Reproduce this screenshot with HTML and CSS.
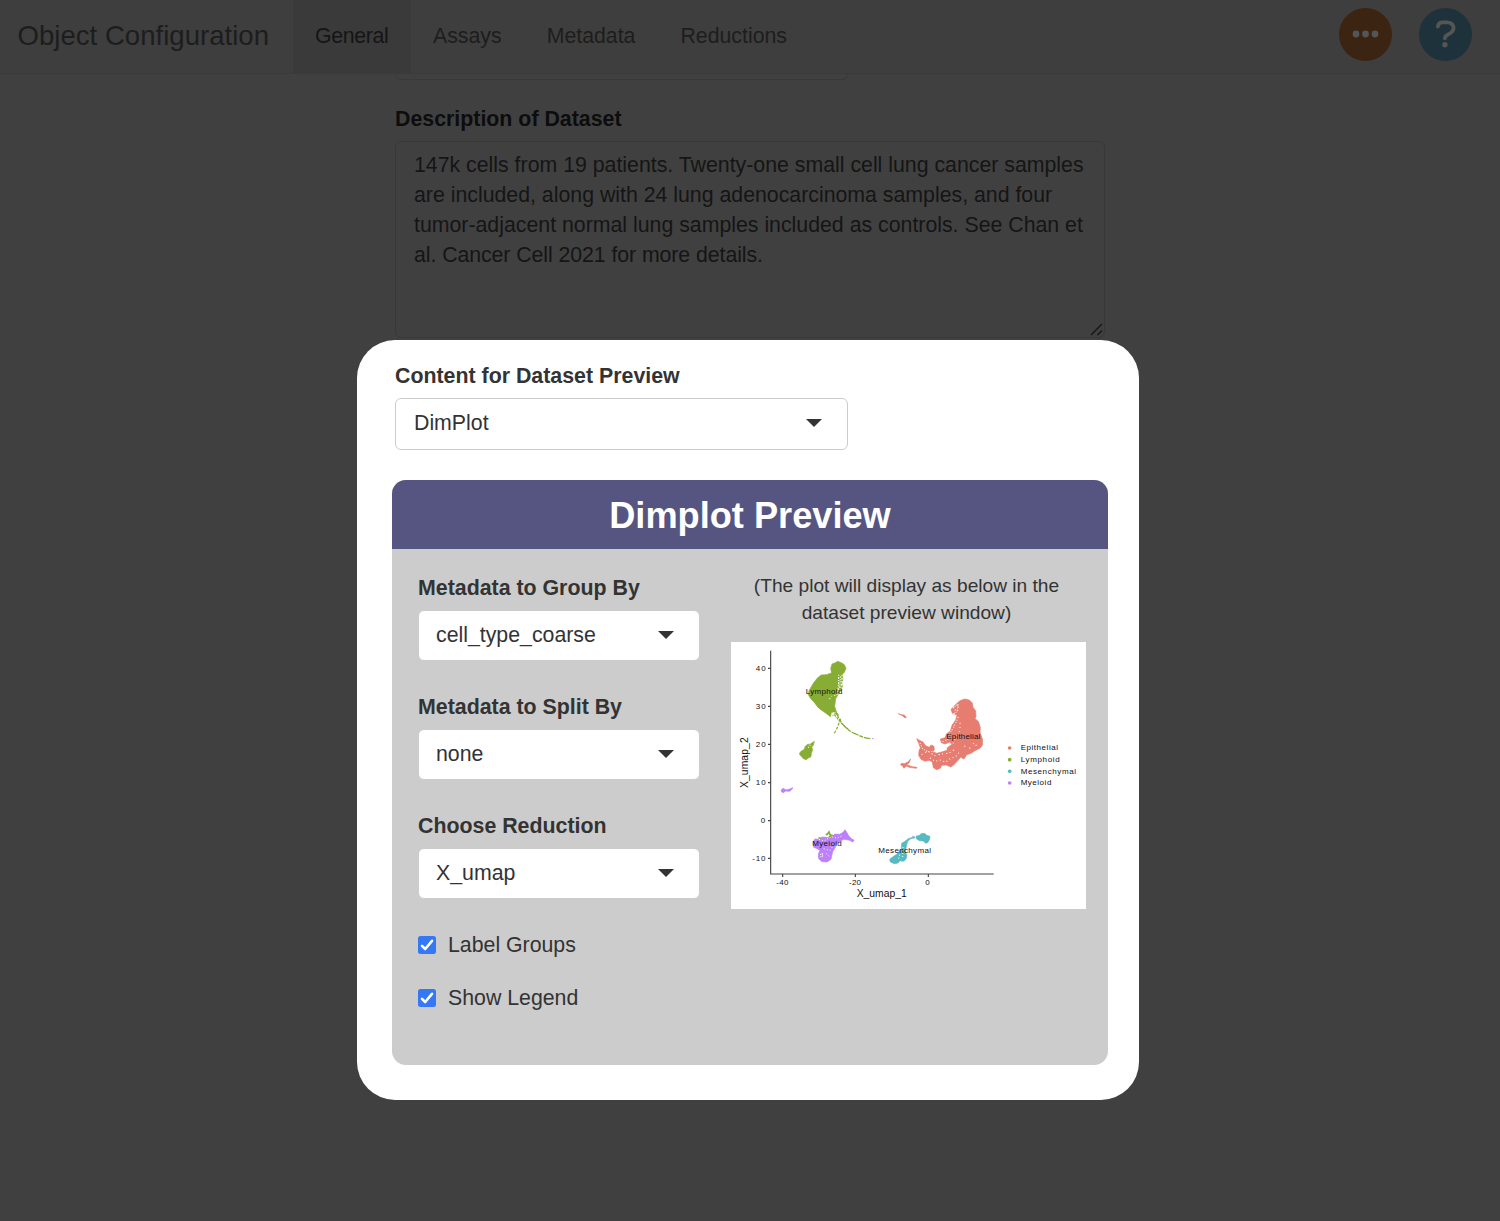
FILE: index.html
```html
<!DOCTYPE html>
<html lang="en">
<head>
<meta charset="utf-8">
<title>Object Configuration</title>
<link rel="stylesheet" href="styles.css">
</head>
<body>
<header class="navbar">
  <div class="brand"><span>Object Configuration</span></div>
  <nav class="tabs">
    <a class="tab active"><span>General</span></a>
    <a class="tab"><span>Assays</span></a>
    <a class="tab"><span>Metadata</span></a>
    <a class="tab"><span>Reductions</span></a>
  </nav>
  <div class="actions">
    <svg class="round" viewBox="0 0 53 53"><circle cx="26.5" cy="26.5" r="26.5" fill="#3b2412"/><g fill="#555"><circle cx="17" cy="26" r="3.4"/><circle cx="26.5" cy="26" r="3.4"/><circle cx="36" cy="26" r="3.4"/></g></svg>
    <svg class="round" viewBox="0 0 53 53"><circle cx="26.5" cy="26.5" r="26.5" fill="#1e323b"/><path d="M18.8 18.5C19.2 15.8 21.2 14.4 23.7 14.4H28.3C32.7 14.4 35 17.5 34.5 20.8C34.1 23.5 32.2 24.8 29.7 26.2C27 27.7 25.9 28 25.9 30.2" fill="none" stroke="#555" stroke-width="3.8" stroke-linecap="round"/><circle cx="25.9" cy="36.8" r="2.7" fill="#555"/></svg>
  </div>
</header>
<main class="page">
  <section class="fields">
    <div class="cut-input"></div>
    <label class="label dim"><span>Description of Dataset</span></label>
    <div class="textarea">
      <span>147k cells from 19 patients. Twenty-one small cell lung cancer samples</span><br>
      <span>are included, along with 24 lung adenocarcinoma samples, and four</span><br>
      <span>tumor-adjacent normal lung samples included as controls. See Chan et</span><br>
      <span class="last-line">al. Cancer Cell 2021 for more details.</span>
      <svg class="grip" viewBox="0 0 13 13"><path d="M1 12 12 1M7.5 12 12 7.5" stroke="#151515" stroke-width="1.4"/></svg>
    </div>
  </section>
  <section class="spotlight">
    <label class="label"><span>Content for Dataset Preview</span></label>
    <div class="select wide"><span>DimPlot</span><i class="caret"></i></div>
    <div class="panel">
      <h2 class="panel-title"><span>Dimplot Preview</span></h2>
      <div class="panel-body">
        <div class="controls">
          <label class="label"><span>Metadata to Group By</span></label>
          <div class="select"><span>cell_type_coarse</span><i class="caret"></i></div>
          <label class="label"><span>Metadata to Split By</span></label>
          <div class="select"><span>none</span><i class="caret"></i></div>
          <label class="label"><span>Choose Reduction</span></label>
          <div class="select"><span>X_umap</span><i class="caret"></i></div>
          <div class="check"><svg viewBox="0 0 18 18"><rect width="18" height="18" rx="2.5" fill="#3478f6"/><path d="M4 9.8 7.2 13 14 4.8" fill="none" stroke="#fff" stroke-width="2.6" stroke-linecap="round" stroke-linejoin="round"/></svg><span>Label Groups</span></div>
          <div class="check"><svg viewBox="0 0 18 18"><rect width="18" height="18" rx="2.5" fill="#3478f6"/><path d="M4 9.8 7.2 13 14 4.8" fill="none" stroke="#fff" stroke-width="2.6" stroke-linecap="round" stroke-linejoin="round"/></svg><span>Show Legend</span></div>
        </div>
        <div class="preview">
          <p class="note"><span>(The plot will display as below in the</span><br><span>dataset preview window)</span></p>
          <svg class="plot" viewBox="18 20 1065 801">
            <g fill="#87ad34" stroke="#87ad34" stroke-width="2" stroke-linejoin="round">
              <path d="M317 100 321 86 331 82 338 78 349 82 358 88 363 99 358 111 352 117 354 134 350 140 352 154 346 168 339 178 332 190 329 213 334 230 341 240 330 235 325 230 319 233 316 244 303 234 290 225 280 217 266 199 256 189 250 178 252 166 265 144 278 127 289 119 304 118 320 113Z"/>
              <path d="M224 353 229 347 237 343 241 333 246 328 256 326 268 318 265 330 260 335 263 343 259 354 258 364 250 368 244 373 235 370 229 363 224 358Z"/>
            </g>
            <g fill="none" stroke="#87ad34" stroke-width="3.6">
              <path d="M332 228C345 260 360 281 388 294S419 308 436 310" stroke-dasharray="22 3 12 3"/>
              <path d="M328 237C344 259 351 267 372 284" stroke-dasharray="8 3"/>
              <path d="M347 250 334 284 326 296" stroke-dasharray="9 4"/>
            </g>
            <g fill="none" stroke="#fff" stroke-width="3.4">
              <path d="M341 118V145L338 174" stroke-dasharray="3 4 6 3"/>
              <path d="M347 123 344 155 335 181" stroke-dasharray="4 5 3 3"/>
              <path d="M351 119V136L347 160" stroke-dasharray="3 5 6 4"/>
              <path d="M331 180 318 183M313 190h3M249 335l8 4M255 328v5" stroke-dasharray="3 9"/>
              <path d="M320 234 333 231" stroke-dasharray="3 3"/>
            </g>
            <g fill="#e77d71" stroke="#e77d71" stroke-width="2" stroke-linejoin="round">
              <path d="M696 204 705 196 719 191 733 194 742 203 744 216 752 226 753 244 750 249 761 260 766 277 765 291 772 310 773 328 766 338 750 346 738 354 725 358 717 371 707 366 698 376 686 389 677 395 664 389 650 390 646 399 635 403 625 397 622 380 613 375 600 378 588 372 581 360 582 347 586 337 580 321 575 310 586 316 594 320 602 331 613 336 618 329 627 333 628 344 623 349 635 354 650 350 666 345 667 337 681 327 674 320 660 326 649 322 646 311 660 307 665 295 676 287 681 270 692 254 696 239 682 234 678 222 686 214Z"/>
              <path d="M527 389 529 384 538 385 549 380 557 371 552 383 545 388 562 394 576 396 574 399 553 396 544 392 537 399 532 391Z"/>
              <path d="M520 235 529 238 538 239 544 246 540 248 532 241Z"/>
            </g>
            <g fill="none" stroke="#fff" stroke-width="3.2">
              <path d="M684 218 700 207 699 219 689 225M686 235l9-5 4-7" stroke-dasharray="4 3 2 4"/>
              <path d="M700 245 686 276 673 296 667 314 651 319" stroke-dasharray="3 6 3 4"/>
              <path d="M705 262v23l-15 26-9 20" stroke-dasharray="3 10"/>
              <path d="M585 323 593 341 611 350 624 348" stroke-dasharray="3 5"/>
              <path d="M590 358 608 347 629 361 650 356 673 353 693 340" stroke-dasharray="3 9 4 7"/>
              <path d="M615 368 631 378 645 374 662 381 675 370 692 364 704 349" stroke-dasharray="3 8"/>
              <path d="M718 332 734 339 749 320 757 338" stroke-dasharray="3 14"/>
            </g>
            <g fill="#bc80fa" stroke="#bc80fa" stroke-width="2" stroke-linejoin="round">
              <path d="M264 620 270 611 281 612 291 605 304 606 317 607 330 596 344 597 354 591 360 583 366 592 371 601 380 611 387 614 384 620 372 614 356 612 346 618 334 625 330 638 323 649 318 672 306 680 291 679 281 670 280 655 285 646 277 640 266 636Z"/>
              <path d="M169 463 175 459 183 464 192 462 203 457 202 461 194 468 182 467 175 472 169 469Z"/>
            </g>
            <g fill="none" stroke="#fff" stroke-width="3">
              <path d="M282 612 298 617 317 603 336 609 354 600" stroke-dasharray="3 6"/>
              <path d="M285 658 293 654 292 665 286 664" stroke-dasharray="4 2"/>
              <path d="M296 640 315 646 322 635M303 654 313 663" stroke-dasharray="3 7"/>
            </g>
            <path d="M302 597h5l5-7 3 8 6 2-9 5M280 608h7M317 626h5" fill="none" stroke="#87ad34" stroke-width="5"/>
            <g fill="#57bac0" stroke="#57bac0" stroke-width="2" stroke-linejoin="round">
              <path d="M573 603 584 600 588 595 599 594 605 600 615 603 614 611 609 621 602 624 595 617 583 616 574 610Z"/>
              <path d="M550 610 569 604 569 608 557 610 548 618 545 628 542 643 540 650 546 659 543 672 535 678 525 676 519 683 508 685 496 680 494 672 504 664 515 657 523 648 529 640 530 624 538 619Z"/>
            </g>
            <path d="M534 635 533 665M524 658 521 671" stroke="#fff" stroke-width="3" stroke-dasharray="3 6"/>
            <path d="M562 603h4M322 240h4M441 310h4" stroke="#bc80fa" stroke-width="3"/>
            <path d="M137 46V716H806M129 99h8M129 213h8M129 327h8M129 442h8M129 556h8M129 669h8M173 716v9M391 716v9M610 716v9" fill="none" stroke="#444" stroke-width="3.4"/>
            <g class="ticks">
              <text x="92" y="107" textLength="30">40</text><text x="92" y="221" textLength="30">30</text><text x="92" y="335" textLength="30">20</text><text x="92" y="450" textLength="30">10</text><text x="107" y="564" textLength="14">0</text><text x="82" y="677" textLength="39">-10</text>
              <text x="154" y="749" textLength="36">-40</text><text x="372" y="749" textLength="36">-20</text><text x="601" y="749" textLength="14">0</text>
            </g>
            <g class="axis"><text x="395" y="785" textLength="150">X_umap_1</text><text transform="translate(68 458) rotate(-90)" textLength="152">X_umap_2</text></g>
            <g class="names">
              <text x="242" y="176" textLength="110">Lymphoid</text><text x="664" y="310" textLength="102">Epithelial</text><text x="262" y="633" textLength="88">Myeloid</text><text x="460" y="654" textLength="158">Mesenchymal</text>
              <text x="887" y="345" textLength="112">Epithelial</text><text x="887" y="380" textLength="117">Lymphoid</text><text x="887" y="415" textLength="166">Mesenchymal</text><text x="887" y="450" textLength="92">Myeloid</text>
            </g>
            <circle cx="854" cy="338" r="5.5" fill="#e77d71"/><circle cx="854" cy="373" r="5.5" fill="#87ad34"/><circle cx="854" cy="408" r="5.5" fill="#57bac0"/><circle cx="854" cy="443" r="5.5" fill="#bc80fa"/>
          </svg>
        </div>
      </div>
    </div>
  </section>
</main>
</body>
</html>
```
FILE: styles.css
```css
* { box-sizing: border-box; }
body {
  margin: 0;
  height: 1221px;
  overflow: hidden;
  background: #404040;
  color: #333;
  font-family: "Liberation Sans", Arial, sans-serif;
  font-size: 21.3px;
  line-height: 30px;
  white-space: nowrap;
}
.navbar {
  display: flex;
  height: 74px;
  background: #3e3e3e;
  border-bottom: 1px solid #3a3a3a;
  color: #1d1d1d;
}
.brand { width: 293px; padding: 21px 0 0 17.5px; font-size: 27.6px; }
.tabs { display: flex; }
.tab { padding: 20.5px 23px 0 22px; }
.tab.active { width: 118px; background: #3a3a3a; color: #151515; letter-spacing: -.35px; }
.actions { display: flex; gap: 27px; margin-left: auto; padding: 8px 28px 0 0; }
.round { width: 53px; height: 53px; }
.page { display: flex; flex-direction: column; }
.fields { width: 710px; height: 266px; margin-left: 395px; }
.cut-input {
  width: 453px;
  height: 6px;
  border: 1px solid #393939;
  border-top: 0;
  border-radius: 0 0 6px 6px;
}
.label { display: block; height: 30px; font-weight: 700; font-size: 21.35px; }
.dim { margin-top: 24px; color: #0d0d0d; }
.textarea {
  position: relative;
  height: 197px;
  margin-top: 7px;
  padding: 8px 18px;
  border: 1px solid #383838;
  border-radius: 6px;
  color: #151515;
}
.last-line { letter-spacing: -.07px; }
.grip { position: absolute; right: 1px; bottom: 1px; width: 13px; height: 13px; }
.spotlight {
  width: 782px;
  height: 760px;
  margin-left: 357px;
  padding: 21px 31px 0 35px;
  border-radius: 38px;
  background: #fff;
}
.spotlight > .label { margin-left: 3px; }
.select {
  display: flex;
  align-items: center;
  justify-content: space-between;
  width: 282px;
  height: 51px;
  padding: 0 25px 2px 17px;
  border: 1px solid #ccc;
  border-radius: 6px;
  background: #fff;
}
.select.wide { width: 453px; height: 52px; margin: 7px 0 30px 3px; padding-left: 18px; }
.caret { border: 8px solid transparent; border-top-color: #333; border-bottom: 0; }
.panel { width: 716px; height: 585px; border-radius: 14px; background: #ccc; overflow: hidden; }
.panel-title {
  height: 69px;
  margin: 0;
  background: #565582;
  color: #fff;
  font-size: 36.2px;
  line-height: 72px;
  text-align: center;
}
.panel-body { display: flex; padding: 24px 22px 0 26px; justify-content: space-between; }
.controls .select { margin: 7px 0 31px; }
.check { display: flex; align-items: center; gap: 12px; height: 30px; margin-bottom: 23px; }
.check svg { width: 18px; height: 18px; }
.preview { width: 355px; }
.note { margin: -1px 0 16px -4px; font-size: 19.15px; line-height: 27px; text-align: center; }
.plot { display: block; width: 355px; height: 267px; background: #fff; }
.plot text { fill: #111; }
.ticks { font-size: 24px; }
.names { font-size: 24px; }
.axis { font-size: 31px; }
```
